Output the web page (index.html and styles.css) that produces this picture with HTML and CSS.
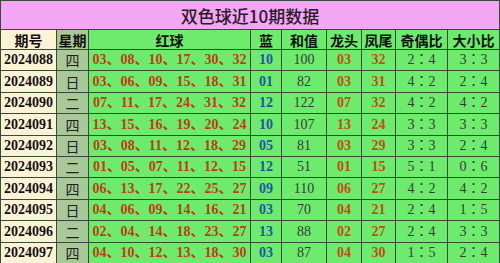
FILE: index.html
```html
<!DOCTYPE html>
<html lang="zh">
<head>
<meta charset="utf-8">
<title>双色球近10期数据</title>
<link rel="stylesheet" href="styles.css">
</head>
<body>
<div class="table">
  <div class="title">双色球近10期数据</div>

  <div class="c h qh">期号</div>
  <div class="c h wk">星期</div>
  <div class="c h">红球</div>
  <div class="c h">蓝</div>
  <div class="c h">和值</div>
  <div class="c h">龙头</div>
  <div class="c h">凤尾</div>
  <div class="c h">奇偶比</div>
  <div class="c h">大小比</div>

  <div class="c qh num">2024088</div><div class="c wk day">四</div><div class="c red">03、08、10、17、30、32</div><div class="c blue">10</div><div class="c sum">100</div><div class="c ht">03</div><div class="c ht">32</div><div class="c ratio">2：4</div><div class="c ratio">3：3</div>

  <div class="c qh num">2024089</div><div class="c wk day">日</div><div class="c red">03、06、09、15、18、31</div><div class="c blue">01</div><div class="c sum">82</div><div class="c ht">03</div><div class="c ht">31</div><div class="c ratio">4：2</div><div class="c ratio">2：4</div>

  <div class="c qh num">2024090</div><div class="c wk day">二</div><div class="c red">07、11、17、24、31、32</div><div class="c blue">12</div><div class="c sum">122</div><div class="c ht">07</div><div class="c ht">32</div><div class="c ratio">4：2</div><div class="c ratio">4：2</div>

  <div class="c qh num">2024091</div><div class="c wk day">四</div><div class="c red">13、15、16、19、20、24</div><div class="c blue">10</div><div class="c sum">107</div><div class="c ht">13</div><div class="c ht">24</div><div class="c ratio">3：3</div><div class="c ratio">3：3</div>

  <div class="c qh num">2024092</div><div class="c wk day">日</div><div class="c red">03、08、11、12、18、29</div><div class="c blue">05</div><div class="c sum">81</div><div class="c ht">03</div><div class="c ht">29</div><div class="c ratio">3：3</div><div class="c ratio">2：4</div>

  <div class="c qh num">2024093</div><div class="c wk day">二</div><div class="c red">01、05、07、11、12、15</div><div class="c blue">12</div><div class="c sum">51</div><div class="c ht">01</div><div class="c ht">15</div><div class="c ratio">5：1</div><div class="c ratio">0：6</div>

  <div class="c qh num">2024094</div><div class="c wk day">四</div><div class="c red">06、13、17、22、25、27</div><div class="c blue">09</div><div class="c sum">110</div><div class="c ht">06</div><div class="c ht">27</div><div class="c ratio">4：2</div><div class="c ratio">4：2</div>

  <div class="c qh num">2024095</div><div class="c wk day">日</div><div class="c red">04、06、09、14、16、21</div><div class="c blue">03</div><div class="c sum">70</div><div class="c ht">04</div><div class="c ht">21</div><div class="c ratio">2：4</div><div class="c ratio">1：5</div>

  <div class="c qh num">2024096</div><div class="c wk day">二</div><div class="c red">02、04、14、18、23、27</div><div class="c blue">13</div><div class="c sum">88</div><div class="c ht">02</div><div class="c ht">27</div><div class="c ratio">2：4</div><div class="c ratio">3：3</div>

  <div class="c qh num">2024097</div><div class="c wk day">四</div><div class="c red">04、10、12、13、18、30</div><div class="c blue">03</div><div class="c sum">87</div><div class="c ht">04</div><div class="c ht">30</div><div class="c ratio">1：5</div><div class="c ratio">2：4</div>
</div>
</body>
</html>
```

FILE: styles.css
```css
html, body {
  margin: 0;
  padding: 0;
  background: #ffffff;
}

body {
  font-family: "Liberation Serif", "Noto Sans CJK SC", serif;
  font-size: 14px;
  color: #1a1a1a;
  overflow: hidden;
}

.table {
  width: 500px;
  box-sizing: border-box;
  display: grid;
  grid-template-columns: 55px 31px 161px 30px 44px 34px 33px 51px 51px;
  grid-template-rows: 28px 19px 20px 21px 20px 21px 20px 20px 21px 20px 21px 20px;
  gap: 1px;
  padding: 1px;
  background: #3a4a3a;
}

.title {
  grid-column: 1 / -1;
  background: #f3a6f3;
  display: flex;
  align-items: center;
  justify-content: center;
  font-family: "Noto Sans CJK SC", sans-serif;
  font-size: 17px;
  font-weight: 500;
  color: #2a1a2a;
  padding-top: 1px;
}

.c {
  background: #6deb6d;
  display: flex;
  align-items: center;
  justify-content: center;
  white-space: nowrap;
  line-height: 1;
}

.h {
  font-family: "Noto Sans CJK SC", sans-serif;
  font-weight: 700;
  font-size: 14px;
  color: #111;
}

.qh {
  background: #fff3d6;
}

.wk {
  background: #a9c898;
}

.num {
  font-weight: 700;
  color: #111;
}

.day {
  font-family: "Noto Sans CJK SC", sans-serif;
  font-weight: 400;
  color: #222;
}

.red {
  font-weight: 700;
  color: #c03c14;
}

.blue {
  font-weight: 700;
  color: #1f56a8;
}

.sum {
  color: #3a3a3a;
}

.ht {
  font-weight: 700;
  color: #c04e14;
}

.ratio {
  font-family: "Liberation Serif", "Noto Sans CJK TC", serif;
  color: #3a3a3a;
}
```
